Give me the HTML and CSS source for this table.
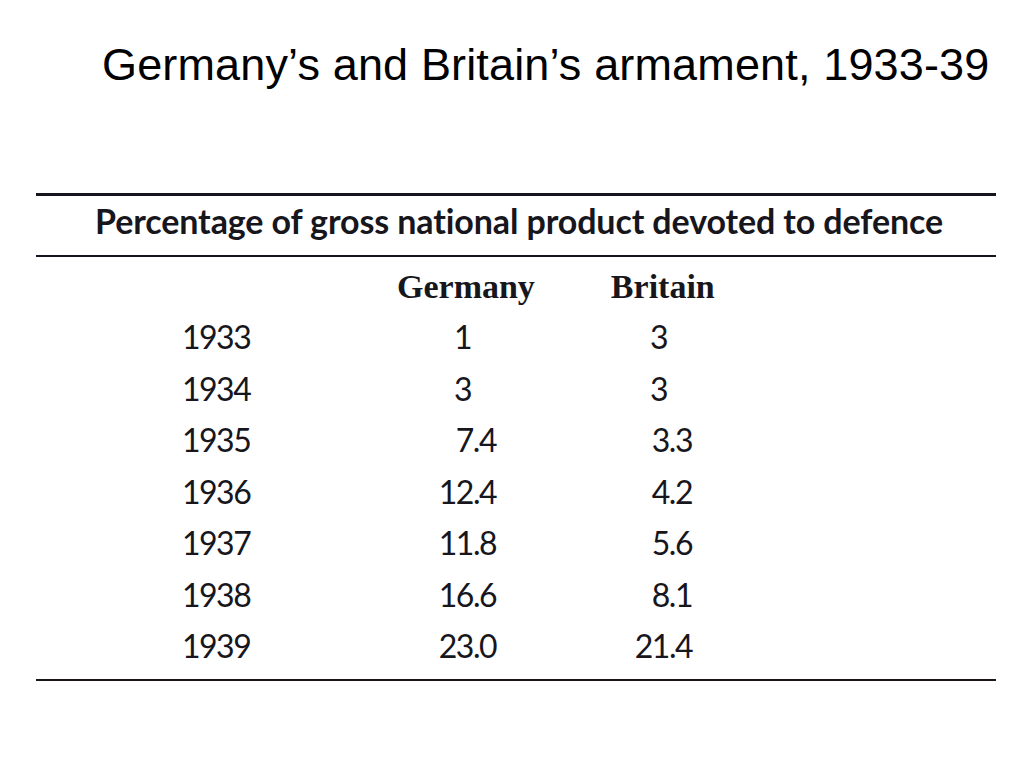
FILE: index.html
```html
<!DOCTYPE html>
<html lang="en">
<head>
<meta charset="utf-8">
<title>Germany’s and Britain’s armament, 1933-39</title>
<link rel="stylesheet" href="styles.css">
</head>
<body>
<main class="slide">
  <h1 class="title">Germany’s and Britain’s armament, 1933-39</h1>
  <section class="table">
    <h2 class="caption">Percentage of gross national product devoted to defence</h2>
    <div class="body">
      <div class="head-row">
        <span class="head">Germany</span>
        <span class="head">Britain</span>
      </div>
      <div class="row"><span class="year">1933</span><span class="val int">1</span><span class="val int">3</span></div>
      <div class="row"><span class="year">1934</span><span class="val int">3</span><span class="val int">3</span></div>
      <div class="row"><span class="year">1935</span><span class="val">7.4</span><span class="val">3.3</span></div>
      <div class="row"><span class="year">1936</span><span class="val">12.4</span><span class="val">4.2</span></div>
      <div class="row"><span class="year">1937</span><span class="val">11.8</span><span class="val">5.6</span></div>
      <div class="row"><span class="year">1938</span><span class="val">16.6</span><span class="val">8.1</span></div>
      <div class="row"><span class="year">1939</span><span class="val">23.0</span><span class="val">21.4</span></div>
    </div>
  </section>
</main>
</body>
</html>
```

FILE: styles.css
```css
html, body {
  margin: 0;
  padding: 0;
  background: #ffffff;
}

.slide {
  width: 1024px;
  height: 768px;
  box-sizing: border-box;
  padding-top: 39px;
}

.title {
  margin: 0;
  padding-left: 102px;
  font-family: "Liberation Sans", Arial, sans-serif;
  font-weight: normal;
  font-size: 45px;
  line-height: 52px;
  letter-spacing: 0.15px;
  color: #000;
  white-space: nowrap;
}

.table {
  margin: 102px 0 0 36px;
  width: 960px;
  border-top: 3px solid #16141c;
  border-bottom: 2px solid #1a1418;
  color: #17161c;
}

.caption {
  margin: 0;
  padding: 0 0 10px 59px;
  font-family: Lato, "Open Sans", sans-serif;
  font-weight: bold;
  font-size: 34px;
  line-height: 49px;
  letter-spacing: -0.11px;
  border-bottom: 2px solid #14141e;
  white-space: nowrap;
}

.body {
  padding: 5px 0 7.5px 0;
}

.head-row {
  display: flex;
  gap: 76px;
  padding-left: 361px;
  font-family: "Liberation Serif", "Times New Roman", serif;
  font-weight: bold;
  font-size: 34px;
  line-height: 49px;
}

.row {
  display: grid;
  grid-template-columns: 200px 114px 196px;
  padding-left: 146px;
  font-family: Lato, "Open Sans", sans-serif;
  font-size: 32px;
  line-height: 51.5px;
  letter-spacing: -1.5px;
}

.val {
  text-align: right;
}

.val.int {
  padding-right: 25px;
}
```
